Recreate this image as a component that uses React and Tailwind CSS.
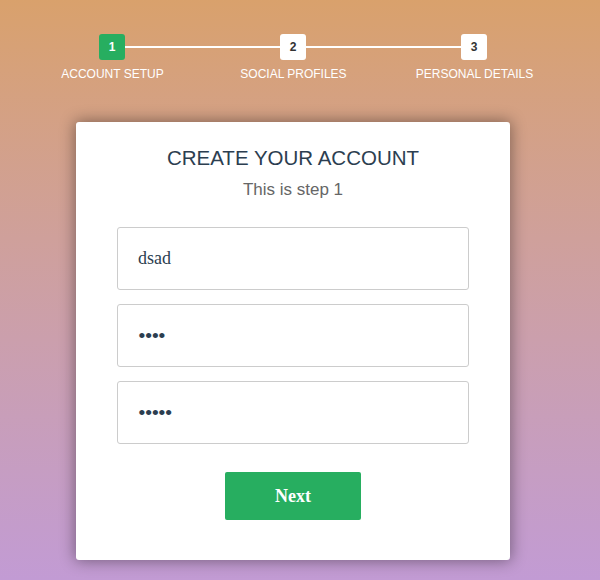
import React, { useState } from "react";

const steps = ["Account Setup", "Social Profiles", "Personal Details"];

const App = () => {
  const [current] = useState(0);
  const [form, setForm] = useState({ email: "dsad", pass: "aaaa", cpass: "aaaaa" });

  const handleChange = (e) => setForm({ ...form, [e.target.name]: e.target.value });

  return (
    <div className="h-[580px] w-full overflow-hidden bg-linear-to-b from-[#d9a16c] to-[#c29bd4] pt-[34px] font-['Liberation_Sans',Arial,sans-serif]">
      {/* progress bar */}
      <div className="ml-[99px] flex w-[388px] items-center">
        {steps.map((s, i) => (
          <React.Fragment key={s}>
            <div
              className={`flex h-[26px] w-[26px] shrink-0 items-center justify-center rounded-[3px] text-[12px] font-bold ${
                i <= current ? "bg-[#27ae60] text-white" : "bg-white text-[#333]"
              }`}
            >
              {i + 1}
            </div>
            {i < steps.length - 1 && <div className="h-[2px] flex-1 bg-white" />}
          </React.Fragment>
        ))}
      </div>
      <div className="ml-[22px] mt-[7px] grid w-[543px] grid-cols-3">
        {steps.map((s) => (
          <p key={s} className="text-center text-[12px] uppercase leading-[14px] text-white">
            {s}
          </p>
        ))}
      </div>

      {/* card */}
      <form className="ml-[76px] mt-[41px] flex w-[434px] flex-col items-center rounded-[3px] bg-white px-[41px] pb-[40px] pt-[25px] shadow-[0_0_15px_1px_rgba(0,0,0,0.4)]">
        <h2 className="text-[20.5px] leading-[22px] text-[#2c3e50]">CREATE YOUR ACCOUNT</h2>
        <h3 className="mt-[11px] text-[17px] leading-[20px] text-[#666]">This is step 1</h3>

        <div className="mt-[27px] flex w-full flex-col gap-[14px]">
          <input
            type="text"
            name="email"
            value={form.email}
            onChange={handleChange}
            className="h-[63px] w-full rounded-[3px] border border-[#ccc] px-[20px] font-['Liberation_Serif',serif] text-[18px] text-[#2c3e50] outline-none"
          />
          <input
            type="password"
            name="pass"
            value={form.pass}
            onChange={handleChange}
            className="h-[63px] w-full rounded-[3px] border border-[#ccc] px-[20px] font-['Liberation_Serif',serif] text-[22px] tracking-[-1px] text-[#2c3e50] outline-none"
          />
          <input
            type="password"
            name="cpass"
            value={form.cpass}
            onChange={handleChange}
            className="h-[63px] w-full rounded-[3px] border border-[#ccc] px-[20px] font-['Liberation_Serif',serif] text-[22px] tracking-[-1px] text-[#2c3e50] outline-none"
          />
        </div>

        <button
          type="button"
          className="mt-[28px] h-[48px] w-[136px] rounded-[2px] bg-[#27ae60] font-['Liberation_Serif',serif] text-[18px] font-bold text-white"
        >
          Next
        </button>
      </form>
    </div>
  );
};

export default App;
